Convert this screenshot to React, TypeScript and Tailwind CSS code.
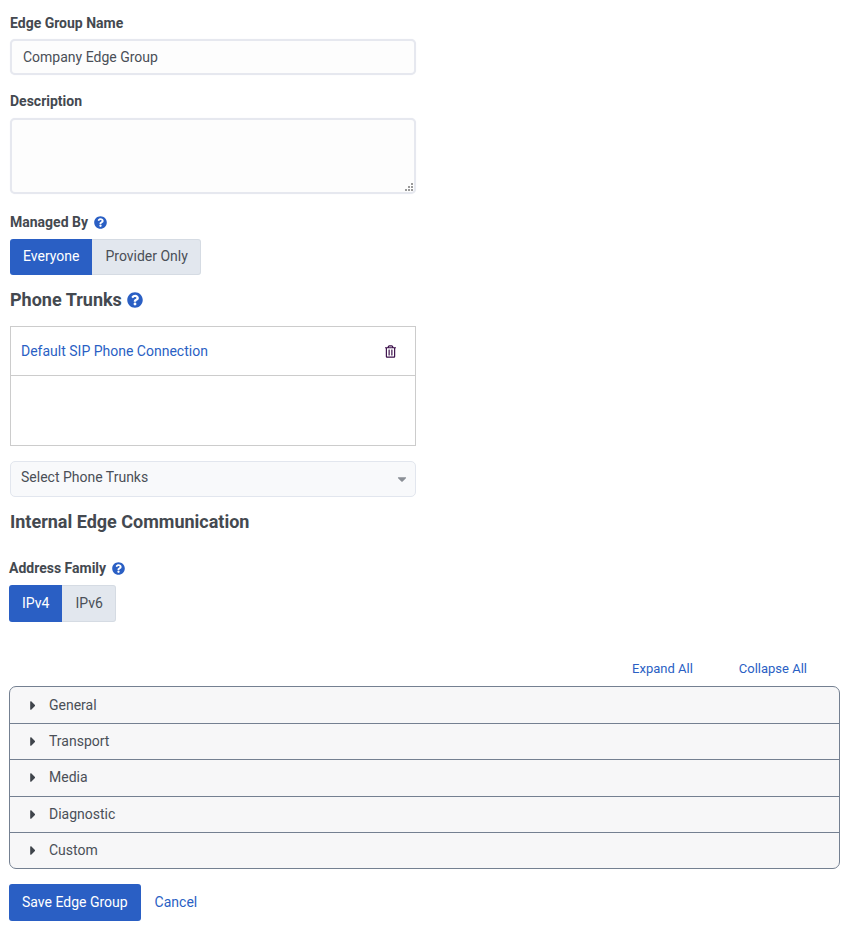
import { FaCaretDown, FaCaretRight, FaQuestionCircle, FaRegTrashAlt } from "react-icons/fa";

const sections = ["General", "Transport", "Media", "Diagnostic", "Custom"];

function Toggle({ on, off, tall }: { on: string; off: string; tall?: boolean }) {
  return (
    <div className={tall ? "flex h-[37px] w-fit text-[14px] leading-[20px]" : "flex h-[36px] w-fit text-[14px] leading-[20px]"}>
      <button className="h-full rounded-l-[3px] bg-[#2a5fc4] px-[13px] pb-[2px] text-white">{on}</button>
      <button className="h-full rounded-r-[3px] border border-l-0 border-[#d5dbe3] bg-[#e2e7ee] pl-[13px] pr-[12px] pb-[2px] text-[#4a4f57]">
        {off}
      </button>
    </div>
  );
}

export default function App() {
  return (
    <div className="h-[935px] w-[847px] bg-white font-['Roboto',sans-serif] text-[14px] text-[#444950]">
      {/* top form */}
      <div className="w-[406px] pl-0 ml-[10px] pt-[15px]">
        <label className="block h-[16px] text-[14px] font-bold leading-[16px]">Edge Group Name</label>
        <input
          readOnly
          value="Company Edge Group"
          className="mt-[8px] block h-[36px] w-full rounded-[5px] border-2 border-[#e6e8ef] bg-[#fdfdfd] px-[11px] text-[14px] text-[#4a4f57] shadow-[0_0_1px_#e6e8ef] outline-none"
        />
        <label className="mt-[18px] block h-[16px] text-[14px] font-bold leading-[16px]">Description</label>
        <div className="relative mt-[9px] h-[76px]">
          <textarea
            readOnly
            className="block h-full w-full resize-none rounded-[5px] border-2 border-[#e6e8ef] bg-[#fdfdfd] px-[11px] shadow-[0_0_1px_#e6e8ef] outline-none"
          />
          {/* resize grip */}
          <svg className="absolute bottom-[3px] right-[3px] h-[9px] w-[9px] text-[#9a9a9a]" viewBox="0 0 9 9" fill="currentColor">
            <rect x="7" y="1" width="2" height="2" />
            <rect x="4" y="4" width="2" height="2" />
            <rect x="7" y="4" width="2" height="2" />
            <rect x="1" y="7" width="2" height="2" />
            <rect x="4" y="7" width="2" height="2" />
            <rect x="7" y="7" width="2" height="2" />
          </svg>
        </div>
        <div className="mt-[20px] flex h-[16px] items-center gap-[6px]">
          <label className="text-[14px] font-bold leading-[16px]">Managed By</label>
          <FaQuestionCircle className="h-[13px] w-[13px] text-[#2a5fc4]" />
        </div>
        <div className="mt-[9px]">
          <Toggle on="Everyone" off="Provider Only" />
        </div>
        <div className="mt-[14px] flex h-[22px] items-center gap-[5px]">
          <h2 className="text-[18px] font-bold leading-[22px]">Phone Trunks</h2>
          <FaQuestionCircle className="h-[16px] w-[16px] text-[#2a5fc4]" />
        </div>
        <div className="mt-[15px] h-[120px] border border-[#cccccc] bg-white">
          <div className="flex h-[49px] items-center justify-between border-b border-[#cccccc] pl-[10px] pr-[19px]">
            <a className="text-[#2a5fc4]">Default SIP Phone Connection</a>
            <FaRegTrashAlt className="h-[13px] w-[11px] text-[#3b0f4a]" />
          </div>
        </div>
        <div className="mt-[15px] flex h-[36px] items-center justify-between rounded-[5px] border border-[#e2e6ee] bg-[#f8f9fb] pb-[3px] pl-[10px] pr-[8px] text-[#4a4f57]">
          <span>Select Phone Trunks</span>
          <FaCaretDown className="mt-[2px] h-[14px] w-[10px] text-[#8a8f96]" />
        </div>
        <h2 className="mt-[14px] h-[22px] text-[18px] font-bold leading-[22px]">Internal Edge Communication</h2>
      </div>

      {/* address family + accordion */}
      <div className="ml-[9px] w-[831px]">
        <div className="mt-[27px] flex h-[16px] items-center gap-[6px]">
          <label className="text-[14px] font-bold leading-[16px]">Address Family</label>
          <FaQuestionCircle className="h-[13px] w-[13px] text-[#2a5fc4]" />
        </div>
        <div className="mt-[9px] h-[37px]">
          <Toggle on="IPv4" off="IPv6" tall />
        </div>
        <div className="mt-[39px] flex h-[16px] justify-end gap-[46px] pr-[33px] text-[13px] leading-[16px] text-[#2a5fc4]">
          <a>Expand All</a>
          <a>Collapse All</a>
        </div>
        <div className="mt-[9px] h-[183px] overflow-hidden rounded-[7px] border border-[#748091] bg-[#f7f7f8]">
          {sections.map((s, i) => (
            <div
              key={s}
              className={
                i === 0
                  ? "flex h-[36px] items-center pl-[20px] text-[#4a4f57]"
                  : i === 2
                    ? "flex h-[37px] items-center border-t border-[#748091] pb-[1px] pl-[20px] text-[#4a4f57]"
                    : "flex h-[36px] items-center border-t border-[#748091] pl-[20px] text-[#4a4f57]"
              }
            >
              <FaCaretRight className="h-[15px] w-[6px] text-[#3f444b]" />
              <span className="ml-[13px]">{s}</span>
            </div>
          ))}
        </div>
        <div className="mt-[15px] flex items-center">
          <button className="h-[37px] rounded-[3px] bg-[#2a5fc4] px-[13px] text-white">Save Edge Group</button>
          <a className="ml-[14px] text-[#2a5fc4]">Cancel</a>
        </div>
      </div>
    </div>
  );
}
